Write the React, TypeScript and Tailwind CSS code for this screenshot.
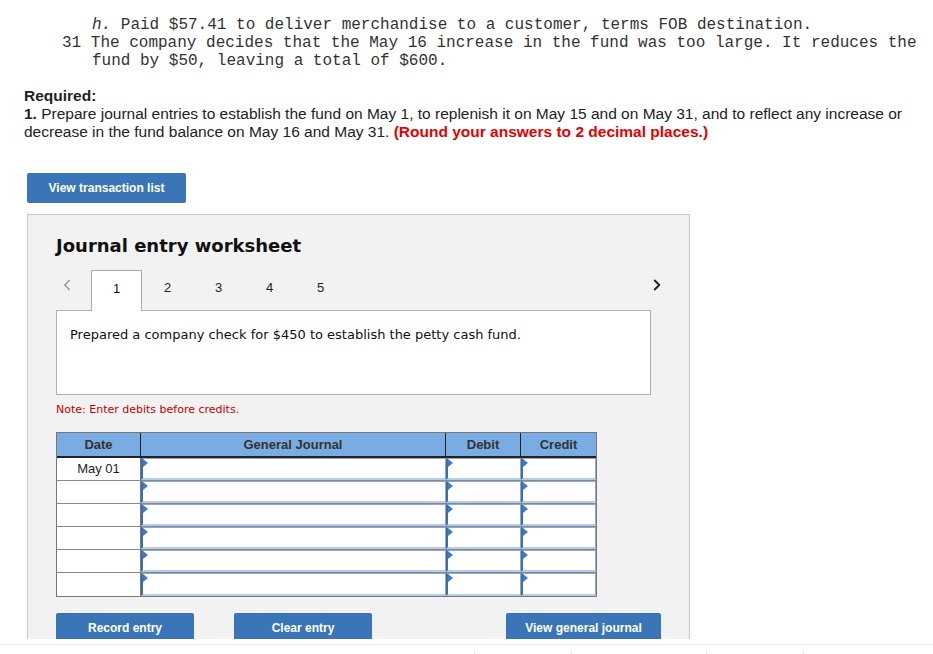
import { ChevronLeft, ChevronRight } from "lucide-react";

const rows = ["May 01", "", "", "", "", ""];
const tabs = ["1", "2", "3", "4", "5"];

const mono = "font-['Liberation_Mono','Courier_New',monospace]";
const arial = "font-['Liberation_Sans',Arial,sans-serif]";
const tahoma = "font-['DejaVu_Sans',Tahoma,sans-serif]";

function BlueButton({ label, width }: { label: string; width: string }) {
  return (
    <button
      className={`${width} h-[30px] rounded-[2px] bg-[#3a75b8] text-white text-[12px] font-bold ${arial}`}
    >
      {label}
    </button>
  );
}

function InputCell() {
  return (
    <div className="relative h-full bg-white border border-[#93a8c4] border-l-2 border-l-[#3b6db3] border-b-2 border-b-[#b4cdee]">
      <span className="absolute left-0 top-0 w-0 h-0 border-y-[4px] border-y-transparent border-l-[5px] border-l-[#3d7cc9]" />
    </div>
  );
}

export default function App() {
  return (
    <div className="w-[933px] h-[654px] bg-white overflow-hidden text-[#222]">
      <div className="h-[639px] overflow-hidden">
        <div className={`${mono} text-[16px] leading-[18px] pt-[16px] text-[#333]`}>
          <div className="pl-[92px]">
            <i>h.</i> Paid $57.41 to deliver merchandise to a customer, terms FOB destination.
          </div>
          <div className="pl-[62px] whitespace-pre">
            31 The company decides that the May 16 increase in the fund was too large. It reduces the
          </div>
          <div className="pl-[92px]">fund by $50, leaving a total of $600.</div>
        </div>

        <div className={`${arial} text-[15.5px] leading-[18px] pl-[24px] mt-[17px] text-[#222]`}>
          <div className="font-bold">Required:</div>
          <div>
            <b>1.</b> Prepare journal entries to establish the fund on May 1, to replenish it on May 15 and on May 31, and to reflect any increase or
            <br />
            decrease in the fund balance on May 16 and May 31.{" "}
            <b className="text-[#e30000]">(Round your answers to 2 decimal places.)</b>
          </div>
        </div>

        <div className="pl-[27px] mt-[32px]">
          <BlueButton label="View transaction list" width="w-[159px]" />
        </div>

        <div className="ml-[27px] mt-[11px] w-[663px] h-[440px] bg-[#f2f2f2] border border-[#c8c8c8] pl-[28px] pt-[19px]">
          <h2 className={`${tahoma} font-bold text-[18px] leading-[24px] text-[#111]`}>
            Journal entry worksheet
          </h2>

          <div className="mt-[12px] w-[610px] flex items-start justify-between">
            <div className="flex items-start">
              <div className="w-[35px] h-[30px] flex items-center pl-[2px]">
                <ChevronLeft className="w-[18px] h-[18px] text-[#9a9a9a]" strokeWidth={2} />
              </div>
              {tabs.map((t, i) => (
                <div
                  key={t}
                  className={`w-[51px] h-[41px] flex justify-center pt-[8px] text-[13px] ${arial} ${
                    i === 0
                      ? "relative z-10 bg-white border border-b-0 border-[#ababab] text-[#111]"
                      : "text-[#222]"
                  }`}
                >
                  {t}
                </div>
              ))}
            </div>
            <div className="h-[30px] flex items-center">
              <ChevronRight className="w-[18px] h-[18px] text-[#222]" strokeWidth={2.5} />
            </div>
          </div>

          <div className="-mt-px w-[595px] h-[85px] bg-white border border-[#b0b0b0] pl-[13px] pt-[14px]">
            <p className={`${tahoma} text-[13px] text-[#111]`}>
              Prepared a company check for $450 to establish the petty cash fund.
            </p>
          </div>

          <p className={`${tahoma} text-[11px] leading-[14px] mt-[8px] text-[#c00000]`}>
            Note: Enter debits before credits.
          </p>

          <div className={`mt-[15px] w-[541px] border border-[#777] ${arial} text-[13px]`}>
            <div className="grid grid-cols-[84px_305px_75px_75px] h-[25px] bg-[#78ace3] border-b-2 border-[#222] font-bold text-[#333]">
              <div className="flex items-center justify-center border-r border-[#222]">Date</div>
              <div className="flex items-center justify-center border-r border-[#222]">General Journal</div>
              <div className="flex items-center justify-center border-r border-[#222]">Debit</div>
              <div className="flex items-center justify-center">Credit</div>
            </div>
            {rows.map((d, i) => (
              <div
                key={i}
                className={`grid grid-cols-[84px_305px_75px_75px] h-[23px] ${
                  i < rows.length - 1 ? "border-b border-[#888]" : ""
                }`}
              >
                <div className="bg-white border-r border-[#777] flex items-center justify-center text-[13px] text-[#222]">
                  {d}
                </div>
                <InputCell />
                <InputCell />
                <InputCell />
              </div>
            ))}
          </div>

          <div className="mt-[16px] w-[605px] flex">
            <BlueButton label="Record entry" width="w-[138px]" />
            <div className="ml-[40px]">
              <BlueButton label="Clear entry" width="w-[138px]" />
            </div>
            <div className="ml-auto">
              <BlueButton label="View general journal" width="w-[155px]" />
            </div>
          </div>
        </div>
      </div>

      <div className="h-[15px] pt-[5px]">
        <div className="border-t border-[#ececec] h-[10px] relative">
          <div className="absolute top-[5px] left-[474px] w-px h-[5px] bg-[#e4e4e4]" />
          <div className="absolute top-[5px] left-[571px] w-px h-[5px] bg-[#e4e4e4]" />
          <div className="absolute top-[5px] left-[706px] w-px h-[5px] bg-[#e4e4e4]" />
          <div className="absolute top-[5px] left-[803px] w-px h-[5px] bg-[#e4e4e4]" />
        </div>
      </div>
    </div>
  );
}
